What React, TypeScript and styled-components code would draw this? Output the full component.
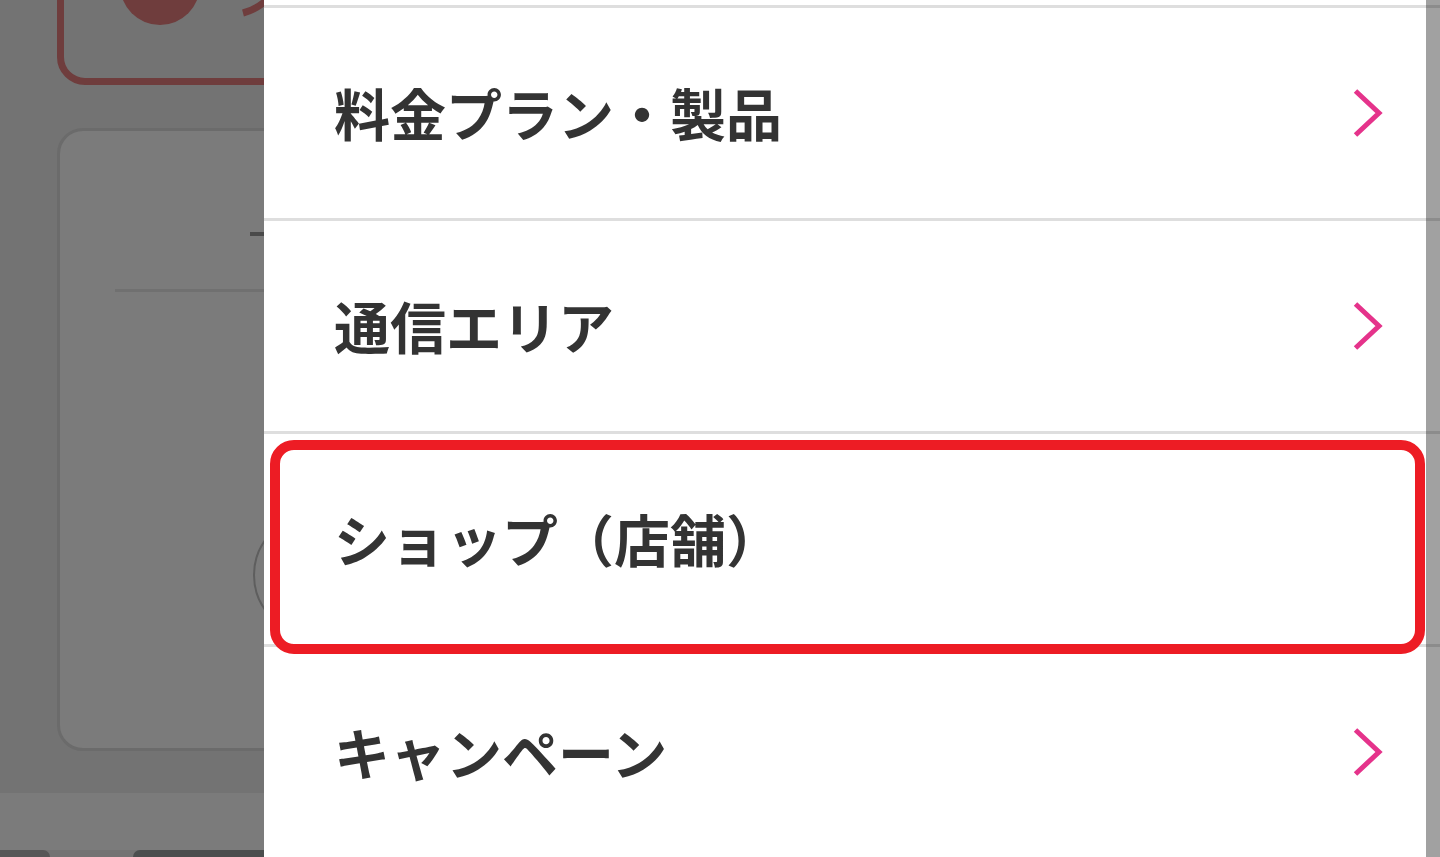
import React from "react";
import styled, { createGlobalStyle } from "styled-components";

const Global = createGlobalStyle`
  html, body { margin: 0; padding: 0; }
  body { font-family: "Noto Sans CJK JP", "Noto Sans", sans-serif; }
`;

const Page = styled.div`
  display: flex;
  width: 1440px;
  height: 857px;
  overflow: hidden;
  background: #737373;
  position: relative;
`;

const Backdrop = styled.div`
  flex: none;
  width: 264px;
  height: 857px;
  overflow: hidden;
  display: flex;
  flex-direction: column;
`;

const BackColumn = styled.div`
  width: 1300px;
  padding-left: 57px;
  display: flex;
  flex-direction: column;
  flex: none;
`;

const BrandCard = styled.div`
  box-sizing: border-box;
  margin-top: -100px;
  height: 185px;
  border: 7px solid #6f3d3d;
  border-radius: 28px;
  display: flex;
  align-items: flex-start;
  padding: 38px 0 0 56px;
`;

const BrandDot = styled.div`
  width: 80px;
  height: 80px;
  border-radius: 50%;
  background: #6f3d3d;
  flex: none;
`;

const InfoCard = styled.div`
  box-sizing: border-box;
  margin-top: 43px;
  height: 623px;
  border: 3px solid #6b6b6b;
  border-radius: 26px;
  background: #7b7b7b;
  display: flex;
  flex-direction: column;
  align-items: flex-start;
`;

const Dash = styled.div`
  margin: 101px 0 0 190px;
  width: 40px;
  height: 4px;
  background: #4a4a4a;
`;

const Rule = styled.div`
  margin: 53px 0 0 55px;
  width: 900px;
  height: 3px;
  background: #707070;
`;

const Ring = styled.div`
  box-sizing: border-box;
  margin: 222px 0 0 193px;
  width: 122px;
  height: 122px;
  border-radius: 50%;
  border: 2px solid #5e5e5e;
`;

const Band = styled.div`
  flex: none;
  margin-top: 42px;
  height: 57px;
  background: #7b7b7b;
`;

const Tiles = styled.div`
  flex: 1;
  display: flex;
  gap: 83px;
`;

const Tile = styled.div<{ $w: number; $tone: string; $side: "l" | "r" }>`
  flex: none;
  width: ${(p) => p.$w}px;
  background: ${(p) => p.$tone};
  border-radius: ${(p) => (p.$side === "r" ? "0 18px 0 0" : "18px 0 0 0")};
`;

const Panel = styled.div`
  flex: 1;
  background: #ffffff;
  padding-top: 5px;
  display: flex;
  flex-direction: column;
`;

const Row = styled.div`
  position: relative;
  flex: none;
  height: 210px;
  border-top: 3px solid #dedede;
  display: flex;
  align-items: center;
  justify-content: space-between;
  padding: 0 57px 0 70px;
`;

const Label = styled.span`
  position: relative;
  z-index: 2;
  font-family: "Noto Sans CJK JP", "Noto Sans", sans-serif;
  font-weight: 700;
  font-size: 56px;
  line-height: 1;
  color: #333333;
  margin-top: -3px;
`;

const Highlight = styled.div`
  position: absolute;
  z-index: 1;
  top: 6px;
  bottom: -10px;
  left: 6px;
  right: 15px;
  border: 10px solid #ed1c24;
  border-radius: 24px;
  background: #ffffff;
  pointer-events: none;
`;

const Shade = styled.div`
  position: absolute;
  z-index: 3;
  top: 0;
  right: 0;
  width: 14px;
  height: 857px;
  background: rgba(0, 0, 0, 0.37);
`;

const Chevron = () => (
  <svg width="30" height="50" viewBox="0 0 30 50" aria-hidden>
    <polyline
      points="2.5,3 26,25 2.5,47"
      fill="none"
      stroke="#e5338b"
      strokeWidth="5"
      strokeLinejoin="miter"
    />
  </svg>
);

const items = [
  { label: "料金プラン・製品", arrow: true, hl: false },
  { label: "通信エリア", arrow: true, hl: false },
  { label: "ショップ（店舗）", arrow: false, hl: true },
  { label: "キャンペーン", arrow: true, hl: false },
];

export default function App() {
  return (
    <Page>
      <Global />
      <Backdrop>
        <BackColumn>
          <BrandCard>
            <BrandDot />
            <svg width="60" height="80" viewBox="0 0 60 80" style={{ marginLeft: 38, flex: "none" }} aria-hidden>
              <path d="M 5 68 Q 20 64 32 52" fill="none" stroke="#6f3d3d" strokeWidth="7" />
            </svg>
          </BrandCard>
          <InfoCard>
            <Dash />
            <Rule />
            <Ring />
          </InfoCard>
        </BackColumn>
        <Band />
        <Tiles>
          <Tile $w={50} $tone="#575757" $side="r" />
          <Tile $w={300} $tone="#4b4e4e" $side="l" />
        </Tiles>
      </Backdrop>
      <Panel>
        {items.map((it) => (
          <Row key={it.label}>
            <Label>{it.label}</Label>
            {it.arrow && <Chevron />}
            {it.hl && <Highlight />}
          </Row>
        ))}
      </Panel>
      <Shade />
    </Page>
  );
}
